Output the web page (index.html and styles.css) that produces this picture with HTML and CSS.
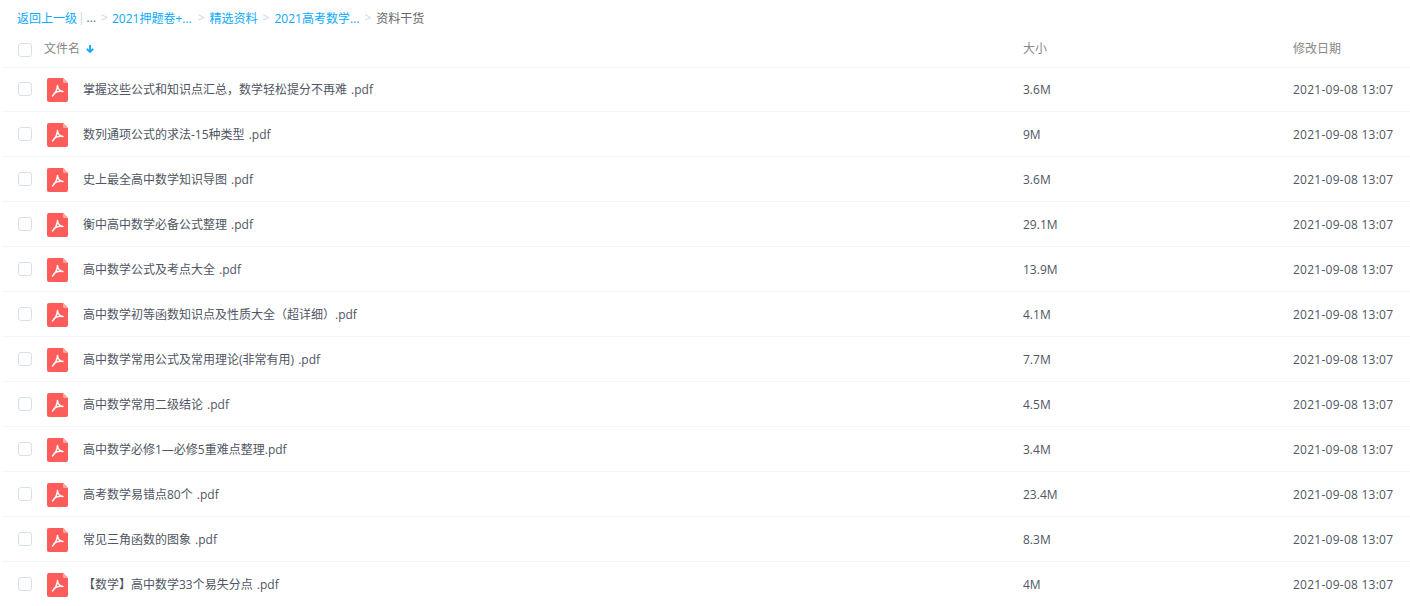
FILE: index.html
```html
<!DOCTYPE html>
<html lang="zh-CN">
<head>
  <meta charset="UTF-8">
  <title>文件列表</title>
  <link rel="stylesheet" href="styles.css">
</head>
<body>

  <svg class="defs" width="0" height="0">
    <symbol id="pdf" viewBox="0 0 21 24">
      <path d="M2 0H16L21 5V22a2 2 0 0 1-2 2H2a2 2 0 0 1-2-2V2a2 2 0 0 1 2-2Z" fill="#fe5b5b"/>
      <path d="M16 0L21 5H17.500a1.500 1.500 0 0 1-1.500-1.500Z" fill="#fea5a5"/>
      <path d="M10.500 7.500C10.300 10.500 8.500 15 5.500 18M10.500 7.500C10.800 10.500 12.500 13 16 13.500M16 13.500C13 13 9.500 13.500 7 15.500" fill="none" stroke="#fff" stroke-width="1.500" stroke-linecap="round"/>
    </symbol>
  </svg>

  <div class="crumbs">
    <a>返回上一级</a><span class="bar">|</span><span class="dots">...</span>
    <i class="sep-first">&gt;</i><a>2021押题卷+...</a>
    <i class="sep-second">&gt;</i><a>精选资料</a>
    <i>&gt;</i><a>2021高考数学...</a>
    <i>&gt;</i><span class="now">资料干货</span>
  </div>

  <div class="row head">
    <span class="check"></span>
    <span class="name">文件名<b class="arrow">
      <svg width="8" height="8" viewBox="0 0 8 8"><path d="M4 0V7M0.800 3.800L4 7L7.200 3.800" fill="none" stroke="#09aaff" stroke-width="1.800"/></svg>
    </b></span>
    <span class="size">大小</span>
    <span class="date">修改日期</span>
  </div>

  <div class="row first">
    <span class="check"></span>
    <svg class="icon"><use href="#pdf"/></svg>
    <span class="name">掌握这些公式和知识点汇总，数学轻松提分不再难 .pdf</span>
    <span class="size">3.6M</span>
    <span class="date">2021-09-08 13:07</span>
  </div>
  <div class="row">
    <span class="check"></span>
    <svg class="icon"><use href="#pdf"/></svg>
    <span class="name">数列通项公式的求法-15种类型 .pdf</span>
    <span class="size">9M</span>
    <span class="date">2021-09-08 13:07</span>
  </div>
  <div class="row">
    <span class="check"></span>
    <svg class="icon"><use href="#pdf"/></svg>
    <span class="name">史上最全高中数学知识导图 .pdf</span>
    <span class="size">3.6M</span>
    <span class="date">2021-09-08 13:07</span>
  </div>
  <div class="row">
    <span class="check"></span>
    <svg class="icon"><use href="#pdf"/></svg>
    <span class="name">衡中高中数学必备公式整理 .pdf</span>
    <span class="size">29.1M</span>
    <span class="date">2021-09-08 13:07</span>
  </div>
  <div class="row">
    <span class="check"></span>
    <svg class="icon"><use href="#pdf"/></svg>
    <span class="name">高中数学公式及考点大全 .pdf</span>
    <span class="size">13.9M</span>
    <span class="date">2021-09-08 13:07</span>
  </div>
  <div class="row">
    <span class="check"></span>
    <svg class="icon"><use href="#pdf"/></svg>
    <span class="name">高中数学初等函数知识点及性质大全（超详细）.pdf</span>
    <span class="size">4.1M</span>
    <span class="date">2021-09-08 13:07</span>
  </div>
  <div class="row">
    <span class="check"></span>
    <svg class="icon"><use href="#pdf"/></svg>
    <span class="name">高中数学常用公式及常用理论(非常有用) .pdf</span>
    <span class="size">7.7M</span>
    <span class="date">2021-09-08 13:07</span>
  </div>
  <div class="row">
    <span class="check"></span>
    <svg class="icon"><use href="#pdf"/></svg>
    <span class="name">高中数学常用二级结论 .pdf</span>
    <span class="size">4.5M</span>
    <span class="date">2021-09-08 13:07</span>
  </div>
  <div class="row">
    <span class="check"></span>
    <svg class="icon"><use href="#pdf"/></svg>
    <span class="name">高中数学必修1—必修5重难点整理.pdf</span>
    <span class="size">3.4M</span>
    <span class="date">2021-09-08 13:07</span>
  </div>
  <div class="row">
    <span class="check"></span>
    <svg class="icon"><use href="#pdf"/></svg>
    <span class="name">高考数学易错点80个 .pdf</span>
    <span class="size">23.4M</span>
    <span class="date">2021-09-08 13:07</span>
  </div>
  <div class="row">
    <span class="check"></span>
    <svg class="icon"><use href="#pdf"/></svg>
    <span class="name">常见三角函数的图象 .pdf</span>
    <span class="size">8.3M</span>
    <span class="date">2021-09-08 13:07</span>
  </div>
  <div class="row">
    <span class="check"></span>
    <svg class="icon"><use href="#pdf"/></svg>
    <span class="name">【数学】高中数学33个易失分点 .pdf</span>
    <span class="size">4M</span>
    <span class="date">2021-09-08 13:07</span>
  </div>

</body>
</html>
```

FILE: styles.css
```css
* { box-sizing: border-box; }
html, body {
  margin: 0; padding: 0; height: 606px; overflow: hidden;
  font-family: 'Open Sans', 'Noto Sans CJK SC', sans-serif;
  font-size: 12px; background-color: #fff; color: #4f5562;
}
.defs { display: block; height: 0; }

.crumbs {
  display: flex; align-items: center; height: 35px;
  padding: 0 0 0 17px; white-space: pre;
}
.crumbs a { color: #09aaff; }
.crumbs .bar { color: #c4d8f4; margin: 0 2px 0 1px; }
.crumbs .dots, .crumbs .now { color: #666; }
.crumbs i { font-style: normal; color: #c4d8f4; margin: 0 5px; }
.crumbs .sep-first { margin-right: 4px; }
.crumbs .sep-second { margin-left: 6px; }

.row {
  display: flex; align-items: center; height: 45px;
  margin-left: 2px; padding-left: 16px;
  border-bottom: 1px solid #f2f6fd;
}
.row.first { height: 44px; padding-bottom: 1px; }
.row.head { height: 33px; color: #888; }
.head span { margin-bottom: 7px; }
.head .check { margin-bottom: 2px; }

.check {
  width: 14px; height: 14px; flex: none;
  border: 1px solid #d6dfea; border-radius: 3px;
}
.icon { width: 21px; height: 24px; margin: 2px 0 0 15px; flex: none; }
.name { flex: 1; margin-left: 15px; white-space: nowrap; word-spacing: 1px; }
.head .name { margin-left: 12px; }
.arrow { margin-left: 2px; }
.size { width: 270px; flex: none; }
.date { width: 117px; flex: none; letter-spacing: 0.25px; }
.head .date { letter-spacing: 0; }
```
